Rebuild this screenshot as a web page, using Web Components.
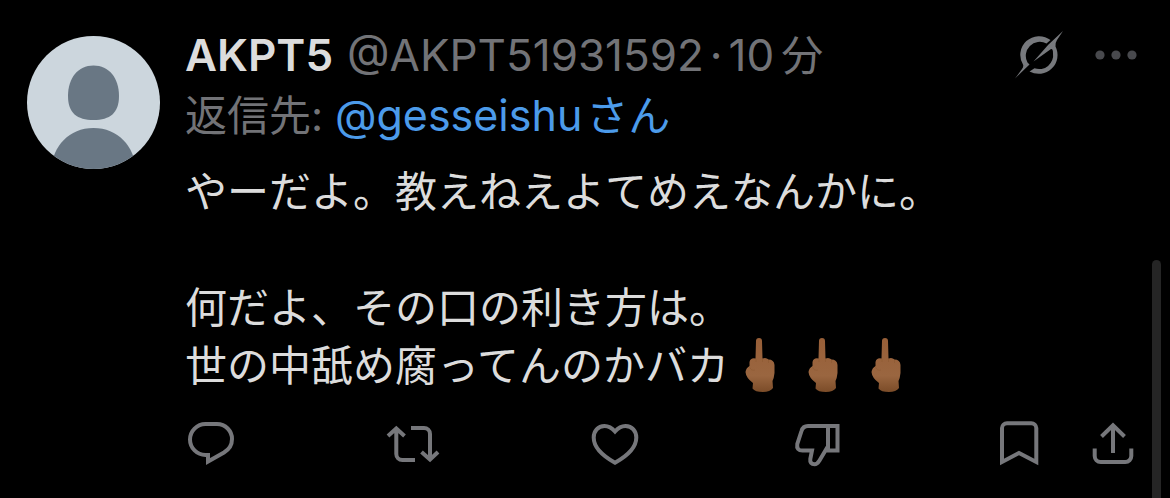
<!DOCTYPE html>
<html lang="ja">
<head>
<meta charset="utf-8">
<meta name="viewport" content="width=device-width, initial-scale=1">
<title>ポスト</title>
<style>
html { background: #000; }
body {
  margin: 0; min-height: 100vh; position: relative; overflow: hidden; background: #000;
  font-family: Inter, "Noto Sans CJK JP", sans-serif; color: #dcdcdc;
  --muted: #727377; --link: #4c9bea;
}
</style>
</head>
<body>
<post-card>
  <user-avatar slot="avatar"></user-avatar>
  <post-header slot="header">
    <span slot="name">AKPT5</span>
    <span slot="handle">@AKPT51931592</span>
    <span slot="time">10<post-kanji>分</post-kanji></span>
  </post-header>
  <reply-line slot="reply" user="@gesseishu"></reply-line>
  <post-text slot="text">やーだよ。教えねえよてめえなんかに。<br><br>何だよ、その口の利き方は。<br>世の中舐め腐ってんのかバカ<hand-emoji></hand-emoji><hand-emoji></hand-emoji><hand-emoji></hand-emoji></post-text>
  <post-actions slot="actions"></post-actions>
</post-card>
<scroll-thumb></scroll-thumb>
<script>
const define = (name, html, setup) => {
  const template = document.createElement('template');
  template.innerHTML = html.trim();
  customElements.define(name, class extends HTMLElement {
    constructor() {
      super();
      this.attachShadow({ mode: 'open' }).append(template.content.cloneNode(true));
    }
    connectedCallback() { if (setup) setup(this); }
  });
};

define('post-card', `
<style>
:host { display: block; padding: 24px 33px 24px 27px; }
article { display: grid; grid-template-columns: 133px minmax(0, 1fr); column-gap: 25px; }
.avatar { padding-top: 12px; }
.text { margin-top: 16px; }
.actions { margin-top: 27px; }
</style>
<article>
  <div class="avatar"><slot name="avatar"></slot></div>
  <div>
    <slot name="header"></slot>
    <slot name="reply"></slot>
    <div class="text"><slot name="text"></slot></div>
    <div class="actions"><slot name="actions"></slot></div>
  </div>
</article>`);

define('user-avatar', `
<style>
:host { display: block; border-radius: 50%; overflow: hidden; background: #ccd6dd; aspect-ratio: 1; }
svg { display: block; width: 100%; }
</style>
<svg viewBox="0 0 133 133" role="img" aria-label="AKPT5" fill="#697784">
  <path d="M66.500 29.500C82 29.500 92 42 92 60C92 77 83 84 66.500 84C50 84 41 77 41 60C41 42 51 29.500 66.500 29.500Z"/>
  <path d="M24 133C26 110 42 92 66.500 92C91 92 107 110 109 133Z"/>
</svg>`);

define('post-kanji', `
<style>:host { display: inline; font-size: 42px; margin-left: 7px; }</style><slot></slot>`);

define('post-header', `
<style>
:host { display: flex; align-items: center; height: 62px; font-size: 44px; line-height: 62px; white-space: nowrap; color: var(--muted); }
.name { font-weight: 600; color: #dcdcdc; margin-right: 14px; }
.dot { margin: 0 6px; }
.tools { margin-left: auto; display: flex; align-items: center; gap: 32px; }
button { all: unset; display: block; cursor: pointer; }
svg { display: block; }
</style>
<span class="name"><slot name="name"></slot></span>
<slot name="handle"></slot><span class="dot">·</span><slot name="time"></slot>
<div class="tools">
  <button type="button" aria-label="Grok">
    <svg width="48" height="48" viewBox="0 0 48 48" fill="#77797d">
      <path d="M35.500 9A18.800 18.800 0 0 0 8.200 34Q8.500 36 7 38L0 47.500L14.500 33.500L12.500 31.500A14 14 0 0 1 31.500 12.500Z"/>
      <path d="M48 0L33.500 13.500L18.500 30.500L36 18Q38 17.500 38 22A14 14 0 0 1 19.500 37.300L14.500 40.400A18.800 18.800 0 0 0 40.500 15.500Q40 12 42 9Z"/>
    </svg>
  </button>
  <button type="button" aria-label="もっと見る">
    <svg width="42" height="48" viewBox="0 0 42 48" fill="#48494d">
      <circle cx="5" cy="24" r="4.600"/><circle cx="21" cy="24" r="4.600"/><circle cx="37" cy="24" r="4.600"/>
    </svg>
  </button>
</div>`);

define('reply-line', `
<style>
:host { display: block; height: 58px; line-height: 58px; font-size: 42px; color: var(--muted); white-space: nowrap; }
a { color: var(--link); text-decoration: none; }
.user { font-size: 43px; margin-right: 4px; }
</style>
返信先: <a href="#"><span class="user"></span>さん</a>`,
  el => { el.shadowRoot.querySelector('.user').textContent = el.getAttribute('user'); });

define('post-text', `
<style>:host { display: block; font-size: 42px; line-height: 58px; font-family: "Noto Sans CJK JP", sans-serif; }</style>
<slot></slot>`);

define('hand-emoji', `
<style>:host { display: inline-block; width: 63px; height: 56px; vertical-align: -12px; } svg { display: block; }</style>
<svg width="63" height="56" viewBox="0 0 63 56" role="img" aria-label="🖕🏾">
  <defs><linearGradient id="skin" x1="0" y1="0" x2="0" y2="1">
    <stop offset="0" stop-color="#985f38"/><stop offset=".7" stop-color="#9a6640"/><stop offset="1" stop-color="#7b4c28"/>
  </linearGradient></defs>
  <path fill="url(#skin)" d="M27 4Q27 1 30 1Q33 1 33 4L33.500 21.500Q37 20 39.500 22.500Q45 22.500 45.500 28V36Q45 41 43.500 44L44 51Q41 55 34 55Q26 55 23.500 51.500L24 46Q17 41 16.500 35Q17 31 20.500 29V25Q21.500 20.500 26.500 21.500Z"/>
  <path d="M20.500 30Q22 34 26 33M27 22V25M33.500 22V25M39.500 23V26" fill="none" stroke="#805027" stroke-opacity=".3"/>
</svg>`);

define('post-actions', `
<style>
:host { display: grid; grid-template-columns: repeat(4, minmax(48px, 1fr)) 94px 48px; padding-left: 2px; }
button { all: unset; width: 48px; cursor: pointer; }
svg { display: block; overflow: visible; fill: none; stroke: #76777b; stroke-width: 4; }
</style>
<button type="button" aria-label="返信"><svg width="48" height="48" viewBox="0 0 48 48">
  <path d="M18.500 4H30C38.500 4 45 11 45 19C45 25 42 29.500 37 32.500L21 41.600V35H18.500C10 35 3 28 3 19.500C3 11 10 4 18.500 4Z"/></svg></button>
<button type="button" aria-label="リポスト"><svg width="48" height="48" viewBox="0 0 48 48">
  <path d="M-1 16L7.300 8.500L15.500 16M7.300 9V34A6 6 0 0 0 13.300 40H26M22 8H35A6 6 0 0 1 41 14V39M32.500 32L41 39.500L49 32"/></svg></button>
<button type="button" aria-label="いいね"><svg width="48" height="48" viewBox="0 0 48 48">
  <path d="M24 11.500C21 8 17.500 6 13.500 6C7 6 2.700 11 2.700 17.500C2.700 27 11 35.500 24 42.700C37 35.500 45.300 27 45.300 17.500C45.300 11 41 6 34.500 6C30.500 6 27 8 24 11.500Z"/></svg></button>
<button type="button" aria-label="低評価"><svg width="48" height="48" viewBox="0 0 48 48">
  <path d="M35 6H44.500V30.500H35ZM35 6H15C11.500 6 9.500 7.500 8.500 11L4.300 24C3.500 28.500 5.500 30.500 9.500 30.500H19L17.300 39C16.800 42.500 18.500 44.200 21.500 44.200C24 44.200 25.300 42.500 26.500 40.500L34.500 27"/></svg></button>
<button type="button" aria-label="ブックマーク"><svg width="48" height="48" viewBox="0 0 48 48">
  <path d="M7 42V8A5 5 0 0 1 12 3.200H36.300A5 5 0 0 1 41.300 8V42L24 33Z"/></svg></button>
<button type="button" aria-label="共有"><svg width="48" height="48" viewBox="0 0 48 48">
  <path d="M24 33V6M12.500 16.500L24 5.300L35.500 16.500M5.700 28.500V36A6 6 0 0 0 11.700 42H36.300A6 6 0 0 0 42.300 36V28.500"/></svg></button>`);

define('scroll-thumb', `
<style>:host { display: block; position: absolute; top: 260px; right: 9px; bottom: 0; width: 9px; border-radius: 5px 5px 0 0; background: #252525; }</style>`);
</script>
</body>
</html>
